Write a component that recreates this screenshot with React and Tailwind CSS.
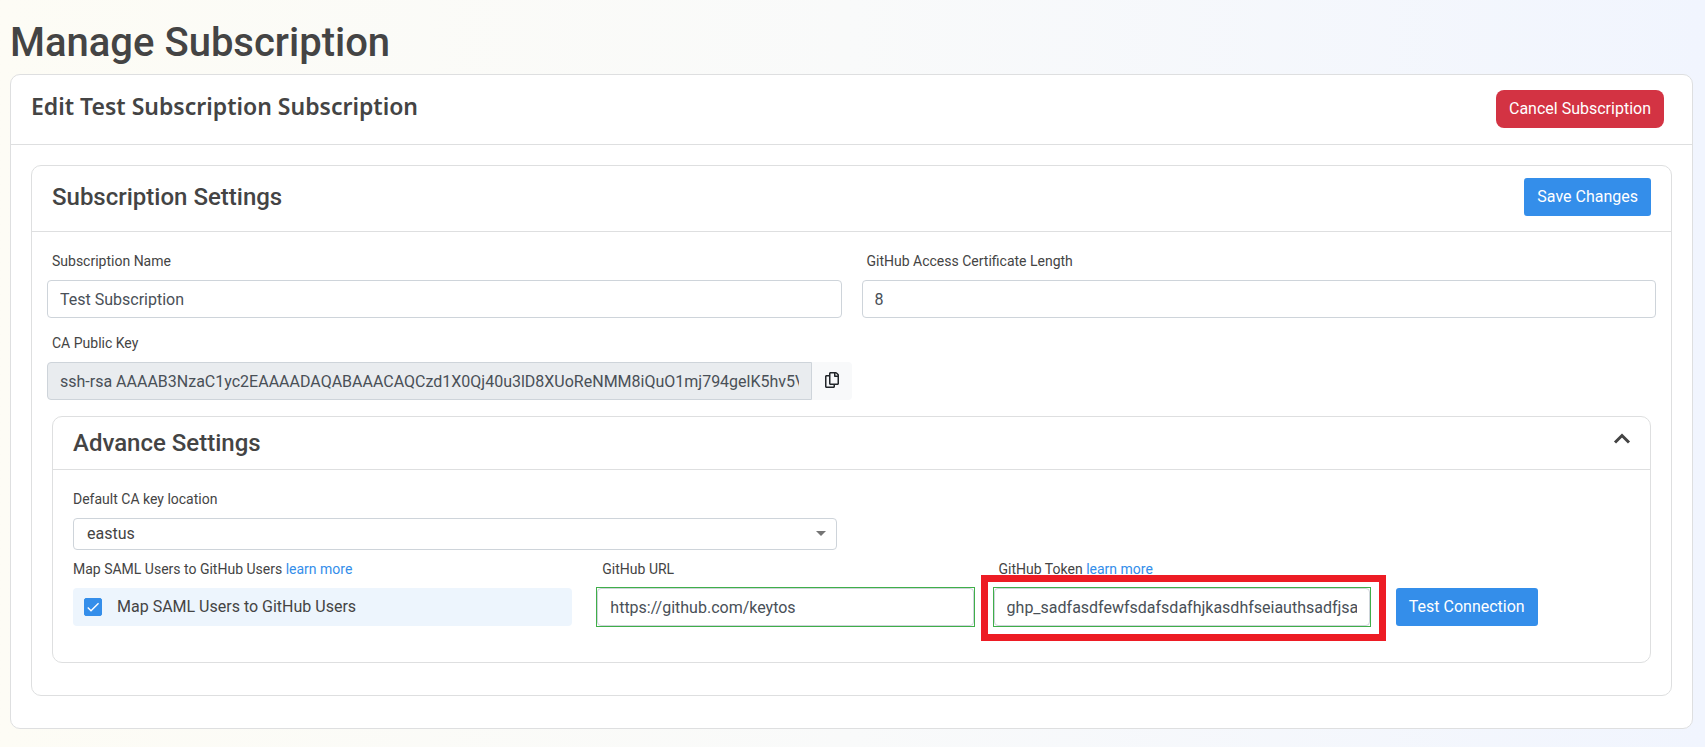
import { useState } from 'react';
import { FaRegCopy } from 'react-icons/fa';
import { MdCheck } from 'react-icons/md';

const PUBLIC_KEY =
  'ssh-rsa AAAAB3NzaC1yc2EAAAADAQABAAACAQCzd1X0Qj40u3lD8XUoReNMM8iQuO1mj794gelK5hv5VwTq8ZkYp2LrXn';

function Card({ className = '', children }) {
  return (
    <section className={`rounded-[10px] border border-[#dedfe0] bg-white ${className}`}>
      {children}
    </section>
  );
}

function Label({ htmlFor, className = '', children }) {
  return (
    <label htmlFor={htmlFor} className={`mb-[9px] block text-sm leading-5 text-[#444] ${className}`}>
      {children}
    </label>
  );
}

function TextInput({ className = 'rounded-[4px]', ...props }) {
  return (
    <input
      type="text"
      className={`block h-[38px] w-full min-w-0 border border-[#ced4da] px-3 text-base text-[#495057] outline-none ${className}`}
      {...props}
    />
  );
}

// Square green frame around a field that passed validation
function ValidInput(props) {
  return (
    <div className="-m-px border border-[#3fae49]">
      <TextInput {...props} />
    </div>
  );
}

function PrimaryButton({ children }) {
  return (
    <button
      type="button"
      className="h-[38px] rounded-[3px] bg-[#348eea] px-[13px] text-base whitespace-nowrap text-white"
    >
      {children}
    </button>
  );
}

function LearnMore() {
  return (
    <a href="#learn-more" className="text-[#348eea]">
      learn more
    </a>
  );
}

export default function App() {
  const [open, setOpen] = useState(true);

  return (
    <main className="min-h-screen bg-linear-90 from-[#fdfcf5] via-[#f9fafa] to-[#f1f5fe] pt-[19px] pr-3 pb-4 pl-2.5 font-[Roboto,sans-serif] text-[#444]">
      <h1 className="mb-[7px] text-[40px] leading-12 font-medium">Manage Subscription</h1>

      <Card>
        <header className="flex items-start justify-between border-b border-[#dedfe0] pt-[15px] pr-7 pb-4 pl-5">
          <h2 className="font-['Noto_Sans',sans-serif] text-[23px] leading-8 font-semibold">
            Edit Test Subscription Subscription
          </h2>
          <button
            type="button"
            className="h-[38px] rounded-lg bg-[#d33343] px-[13px] text-base text-white"
          >
            Cancel Subscription
          </button>
        </header>

        <div className="px-5 pt-5 pb-8">
          <Card>
            <header className="flex items-start justify-between border-b border-[#dedfe0] pt-3 pr-5 pb-[15px] pl-5">
              <h3 className="text-2xl leading-[38px] font-medium">Subscription Settings</h3>
              <PrimaryButton>Save Changes</PrimaryButton>
            </header>

            <div className="grid grid-cols-2 gap-x-5 gap-y-[15px] px-[15px] pt-[19px]">
              <div>
                <Label htmlFor="name" className="pl-[5px]">Subscription Name</Label>
                <TextInput id="name" defaultValue="Test Subscription" />
              </div>
              <div>
                <Label htmlFor="length" className="pl-[5px]">GitHub Access Certificate Length</Label>
                <TextInput id="length" defaultValue="8" />
              </div>
              <div className="-mr-2.5">
                <Label htmlFor="key" className="pl-[5px]">CA Public Key</Label>
                <div className="flex">
                  <TextInput id="key" className="rounded-l-[4px] bg-[#e9ecef]" value={PUBLIC_KEY} readOnly />
                  <button
                    type="button"
                    aria-label="Copy public key"
                    className="flex w-10 shrink-0 items-center justify-center rounded-r-[4px] bg-[#f8f9fa] pb-0.5 text-[#212529]"
                  >
                    <FaRegCopy size={16} />
                  </button>
                </div>
              </div>
            </div>

            <div className="px-5 pt-4 pb-8">
              <Card>
                <header className="flex items-start justify-between border-b border-[#dedfe0] pt-1.5 pr-3 pb-1.5 pl-5">
                  <h3 className="text-2xl leading-10 font-medium">Advance Settings</h3>
                  <button
                    type="button"
                    aria-label="Toggle advance settings"
                    aria-expanded={open}
                    onClick={() => setOpen(!open)}
                  >
                    <svg
                      viewBox="0 0 32 32"
                      className={open ? 'size-8 fill-none stroke-[#444] stroke-3' : 'size-8 rotate-180 fill-none stroke-[#444] stroke-3'}
                    >
                      <path d="M9 19.5l7-7 7 7" />
                    </svg>
                  </button>
                </header>

                {open && (
                  <div className="pt-[19px] pb-9">
                    <div className="grid grid-cols-2 px-5">
                      <div className="pr-[15px]">
                        <Label htmlFor="location">Default CA key location</Label>
                        <div className="relative">
                          <select
                            id="location"
                            defaultValue="eastus"
                            className="block h-8 w-full appearance-none rounded-[4px] border border-[#ced4da] bg-white px-[13px] text-base leading-6 text-[#444] outline-none"
                          >
                            <option>eastus</option>
                          </select>
                          <svg
                            viewBox="0 0 10 5"
                            className="pointer-events-none absolute top-[13px] right-[11px] h-[5px] w-2.5 fill-[#757575]"
                          >
                            <path d="M0 0h10L5 5z" />
                          </svg>
                        </div>
                      </div>
                    </div>

                    <div className="mx-1.5 mt-[9px] grid grid-cols-[4fr_3fr_3fr_2fr] items-end">
                      <div className="pr-[15px] pl-[14px]">
                        <Label htmlFor="map">
                          Map SAML Users to GitHub Users <LearnMore />
                        </Label>
                        <label className="flex h-[38px] items-center rounded-[4px] bg-[#edf5fd] pl-[11px] text-base text-[#444]">
                          <span className="mr-[15px] grid size-[18px] place-items-center">
                            <input
                              id="map"
                              type="checkbox"
                              defaultChecked
                              className="peer col-start-1 row-start-1 size-[18px] appearance-none rounded-[2px] border border-[#348eea] checked:bg-[#348eea]"
                            />
                            <MdCheck
                              size={16}
                              className="pointer-events-none invisible col-start-1 row-start-1 text-white peer-checked:visible"
                            />
                          </span>
                          Map SAML Users to GitHub Users
                        </label>
                      </div>
                      <div className="px-2.5">
                        <Label htmlFor="url" className="pl-[5px]">GitHub URL</Label>
                        <ValidInput id="url" type="url" defaultValue="https://github.com/keytos" />
                      </div>
                      <div className="relative px-2.5">
                        <Label htmlFor="token" className="pl-[5px]">
                          GitHub Token <LearnMore />
                        </Label>
                        <ValidInput id="token" defaultValue="ghp_sadfasdfewfsdafsdafhjkasdhfseiauthsadfjsa" />
                        <div className="pointer-events-none absolute top-4 -right-1.5 -bottom-[15px] -left-[3px] border-[7px] border-[#ed1c24]" />
                      </div>
                      <div className="pl-4">
                        <PrimaryButton>Test Connection</PrimaryButton>
                      </div>
                    </div>
                  </div>
                )}
              </Card>
            </div>
          </Card>
        </div>
      </Card>
    </main>
  );
}
